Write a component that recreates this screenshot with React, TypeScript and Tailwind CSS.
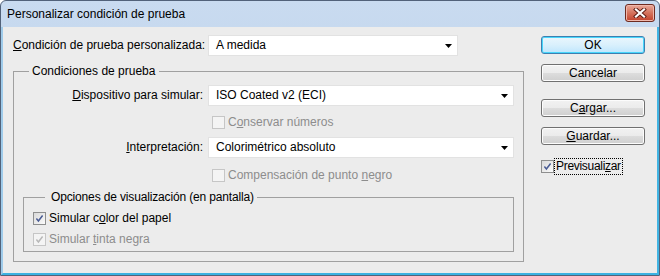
import React from "react";

function Check({ checked = false, disabled = false }: { checked?: boolean; disabled?: boolean }) {
  return (
    <span
      className={
        disabled
          ? "relative inline-flex w-[13px] h-[13px] shrink-0 border border-[#c6c6c6] bg-[#f4f4f4]"
          : "relative inline-flex w-[13px] h-[13px] shrink-0 border border-[#8e8f8f] bg-gradient-to-br from-[#d9d9d9] to-[#fbfbfb]"
      }
    >
      {checked && (
        <svg width="11" height="11" viewBox="0 0 11 11" className="absolute left-0 top-0">
          <path
            d="M2.4 5.6 L4.4 8 L8.6 2.5"
            fill="none"
            stroke={disabled ? "#b8b8b8" : "#4a5c94"}
            strokeWidth="1.5"
            strokeLinejoin="miter"
          />
        </svg>
      )}
    </span>
  );
}

function Select({ value, w }: { value: string; w: string }) {
  return (
    <div
      className={`relative flex h-[21px] items-center border border-[#e2e2e2] bg-white pl-[7px] ${w}`}
    >
      <span className="leading-[15px]">{value}</span>
      <svg width="7" height="4" viewBox="0 0 7 4" className="absolute right-[5px] top-[8px]">
        <path d="M0 0 H7 L3.5 4 Z" fill="#000" />
      </svg>
    </div>
  );
}

function Btn({ children, focus = false, className = "" }: { children: React.ReactNode; focus?: boolean; className?: string }) {
  return (
    <div
      className={
        (focus
          ? "flex h-[18px] w-[104px] items-center justify-center rounded-[3px] border border-[#3c7fb1] bg-gradient-to-b from-[#eaf6fd] via-[#d9f0fc] to-[#bee6fd] shadow-[inset_0_0_0_1px_#48d6fb] "
          : "flex h-[18px] w-[104px] items-center justify-center rounded-[3px] border border-[#707070] bg-[linear-gradient(to_bottom,#f2f2f2_0%,#ebebeb_50%,#dddddd_50%,#cfcfcf_100%)] shadow-[inset_0_0_0_1px_#fcfcfc] ") +
        className
      }
    >
      <span className="leading-[15px]">{children}</span>
    </div>
  );
}

export default function App() {
  return (
    <div className="h-[276px] w-[660px] bg-white font-['Liberation_Sans',Arial,sans-serif] text-[12px] text-black">
      <div className="flex h-full w-full flex-col overflow-hidden rounded-t-[6px] border border-[#52627a] bg-gradient-to-b from-[#c9dbf0] to-[#b4cae6]">
        {/* Title bar */}
        <div className="flex h-[26px] shrink-0 items-center pl-[6px] pr-[4px]">
          <span className="flex-1 text-[12px] text-[#000]">Personalizar condición de prueba</span>
          <div className="mt-[-3px] flex h-[18px] w-[30px] items-center justify-center rounded-[3px] border border-[#6e2a1f] bg-gradient-to-b from-[#e9a899] via-[#d4725c] to-[#c2402a] shadow-[inset_0_0_0_1px_#f0b8ac]">
            <svg width="14" height="10" viewBox="0 0 14 10">
              <path d="M3 1.5 L11 8.5 M11 1.5 L3 8.5" stroke="#5a1a12" strokeWidth="4" strokeLinecap="square" />
              <path d="M3 1.5 L11 8.5 M11 1.5 L3 8.5" stroke="#ffffff" strokeWidth="2.2" strokeLinecap="square" />
            </svg>
          </div>
        </div>

        {/* Client */}
        <div className="flex flex-1 border-x-2 border-b-2 border-l-[#9fcbea] border-r-[#41b4e3] border-b-[#3cb2e2] bg-[#ececec]">
          {/* Left column */}
          <div className="ml-[10px] flex w-[511px] flex-col pt-[8px]">
            <div className="flex h-[21px] items-center">
              <span className="w-[195px] leading-[15px]">
                <span className="underline">C</span>ondición de prueba personalizada:
              </span>
              <Select value="A medida" w="w-[250px]" />
            </div>

            <fieldset className="mt-[7px] flex w-full min-w-0 flex-col border border-[#a0a0a0] pr-[9px] pb-[9px] pt-[6px]">
              <legend className="ml-[15px] pl-[3px] pr-[4px] leading-[16px]">Condiciones de prueba</legend>

              <div className="flex h-[21px] items-center">
                <span className="w-[189px] text-right leading-[15px]">
                  <span className="underline">D</span>ispositivo para simular:
                </span>
                <div className="ml-[5px]">
                  <Select value="ISO Coated v2 (ECI)" w="w-[306px]" />
                </div>
              </div>

              <div className="mt-[10px] flex h-[13px] items-center pl-[198px] text-[#8d8d8d]">
                <Check disabled />
                <span className="ml-[3px] leading-[15px]">
                  C<span className="underline">o</span>nservar números
                </span>
              </div>

              <div className="mt-[8px] flex h-[21px] items-center">
                <span className="w-[189px] text-right leading-[15px]">
                  <span className="underline">I</span>nterpretación:
                </span>
                <div className="ml-[5px]">
                  <Select value="Colorimétrico absoluto" w="w-[306px]" />
                </div>
              </div>

              <div className="mt-[11px] flex h-[13px] items-center pl-[198px] text-[#8d8d8d]">
                <Check disabled />
                <span className="ml-[3px] leading-[15px]">
                  Compensación de punto <span className="underline">n</span>egro
                </span>
              </div>

              <fieldset className="ml-[9px] mt-[7px] flex min-w-0 flex-col border border-[#a0a0a0] pl-[9px] pt-[7px] pb-[5px]">
                <legend className="ml-[12px] pl-[6px] pr-[3px] leading-[16px] tracking-[-0.15px]">Opciones de visualización (en pantalla)</legend>
                <div className="flex h-[13px] items-center">
                  <Check checked />
                  <span className="ml-[3px] leading-[15px]">
                    Simular c<span className="underline">o</span>lor del papel
                  </span>
                </div>
                <div className="mt-[8px] flex h-[13px] items-center text-[#8d8d8d]">
                  <Check checked disabled />
                  <span className="ml-[3px] leading-[15px]">
                    Simular <span className="underline">t</span>inta negra
                  </span>
                </div>
              </fieldset>
            </fieldset>
          </div>

          {/* Right column */}
          <div className="ml-[17px] flex w-[104px] flex-col pt-[9px]">
            <Btn focus>OK</Btn>
            <Btn className="mt-[10px]">Cancelar</Btn>
            <Btn className="mt-[17px]">
              C<span className="underline">a</span>rgar...
            </Btn>
            <Btn className="mt-[10px]">
              <span className="underline">G</span>uardar...
            </Btn>
            <div className="mt-[15px] flex h-[13px] items-center">
              <Check checked />
              <span className="ml-[1px] px-[1px] leading-[15px] tracking-[-0.3px] outline outline-1 outline-dotted outline-black">
                Previsuali<span className="underline">z</span>ar
              </span>
            </div>
          </div>
        </div>
      </div>
    </div>
  );
}
